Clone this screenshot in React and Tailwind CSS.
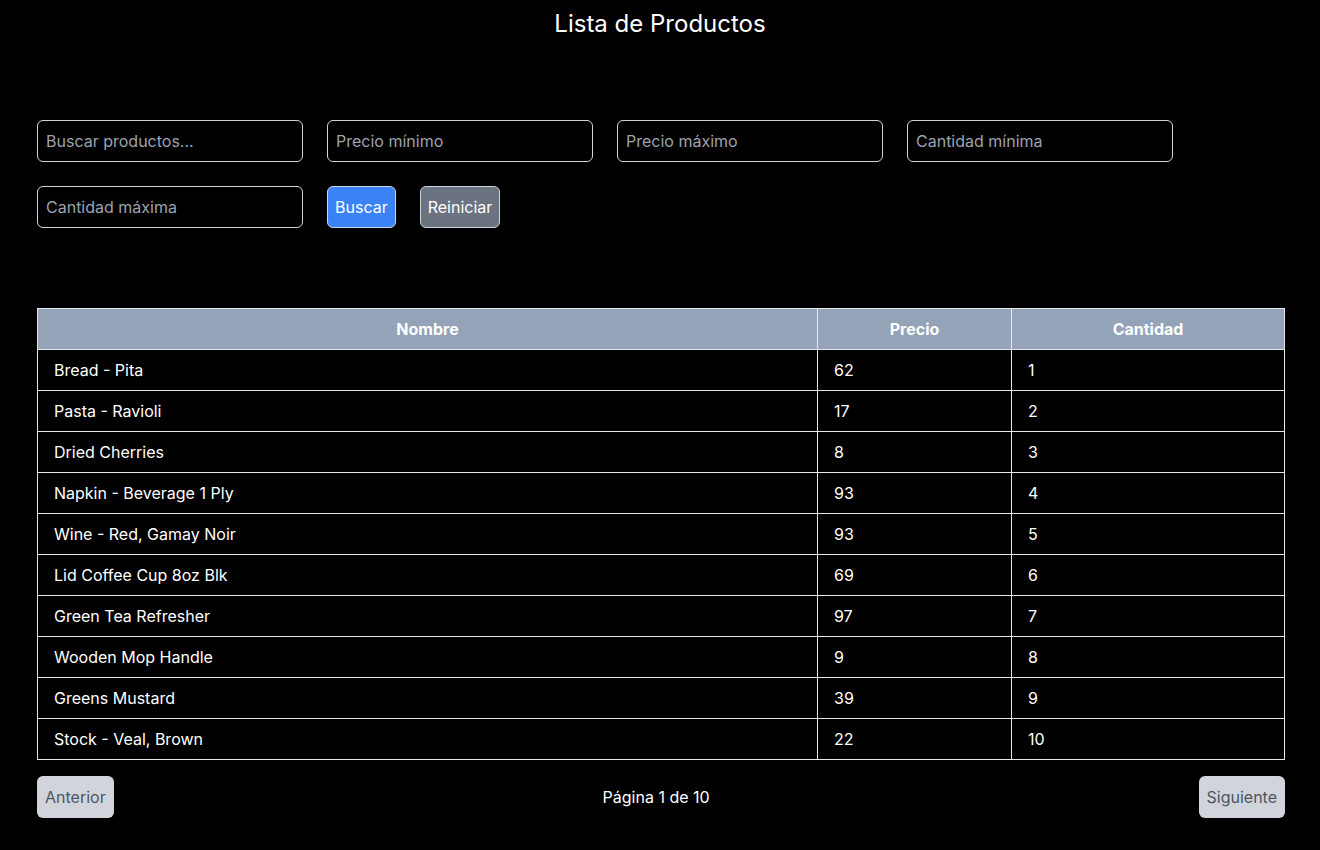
const productos = [
  ['Bread - Pita', 62, 1],
  ['Pasta - Ravioli', 17, 2],
  ['Dried Cherries', 8, 3],
  ['Napkin - Beverage 1 Ply', 93, 4],
  ['Wine - Red, Gamay Noir', 93, 5],
  ['Lid Coffee Cup 8oz Blk', 69, 6],
  ['Green Tea Refresher', 97, 7],
  ['Wooden Mop Handle', 9, 8],
  ['Greens Mustard', 39, 9],
  ['Stock - Veal, Brown', 22, 10],
]

const filtros = ['Buscar productos...', 'Precio mínimo', 'Precio máximo', 'Cantidad mínima', 'Cantidad máxima']

const App = () => {
  return (
    <div className="min-h-screen bg-black text-white font-['Inter',sans-serif] px-[37px] pb-8">
      <h1 className="text-center text-2xl pt-2 leading-8">Lista de Productos</h1>

      {/* Filtros */}
      <div className="mt-[80px] flex flex-wrap gap-6 w-[1200px]">
        {filtros.map(f => (
          <input
            key={f}
            placeholder={f}
            className="w-[266px] h-[42px] px-2 rounded-md border border-[#d1d5db] bg-black text-white placeholder:text-[#9ca3af] outline-none"
          />
        ))}
        <button className="h-[42px] px-[7px] rounded-md border border-[#d1d5db] bg-[#3b82f6] text-white">Buscar</button>
        <button className="h-[42px] px-[7px] rounded-md border border-[#d1d5db] bg-[#6b7280] text-white">Reiniciar</button>
      </div>

      {/* Tabla */}
      <table className="mt-20 w-[1248px] border-collapse">
        <thead>
          <tr className="bg-[#94a3b8]">
            <th className="w-[780px] border border-[#e5e7eb] py-2 font-bold">Nombre</th>
            <th className="w-[194px] border border-[#e5e7eb] py-2 font-bold">Precio</th>
            <th className="border border-[#e5e7eb] py-2 font-bold">Cantidad</th>
          </tr>
        </thead>
        <tbody>
          {productos.map(([n, p, c]) => (
            <tr key={n}>
              <td className="border border-[#e5e7eb] px-4 py-2">{n}</td>
              <td className="border border-[#e5e7eb] px-4 py-2">{p}</td>
              <td className="border border-[#e5e7eb] px-4 py-2">{c}</td>
            </tr>
          ))}
        </tbody>
      </table>

      {/* Paginación */}
      <div className="mt-4 w-[1248px] flex items-center justify-between">
        <button className="h-[42px] px-2 rounded-md bg-[#d1d5db] text-[#4b5563]">Anterior</button>
        <span>Página 1 de 10</span>
        <button className="h-[42px] px-2 rounded-md bg-[#d1d5db] text-[#4b5563]">Siguiente</button>
      </div>
    </div>
  )
}

export default App
